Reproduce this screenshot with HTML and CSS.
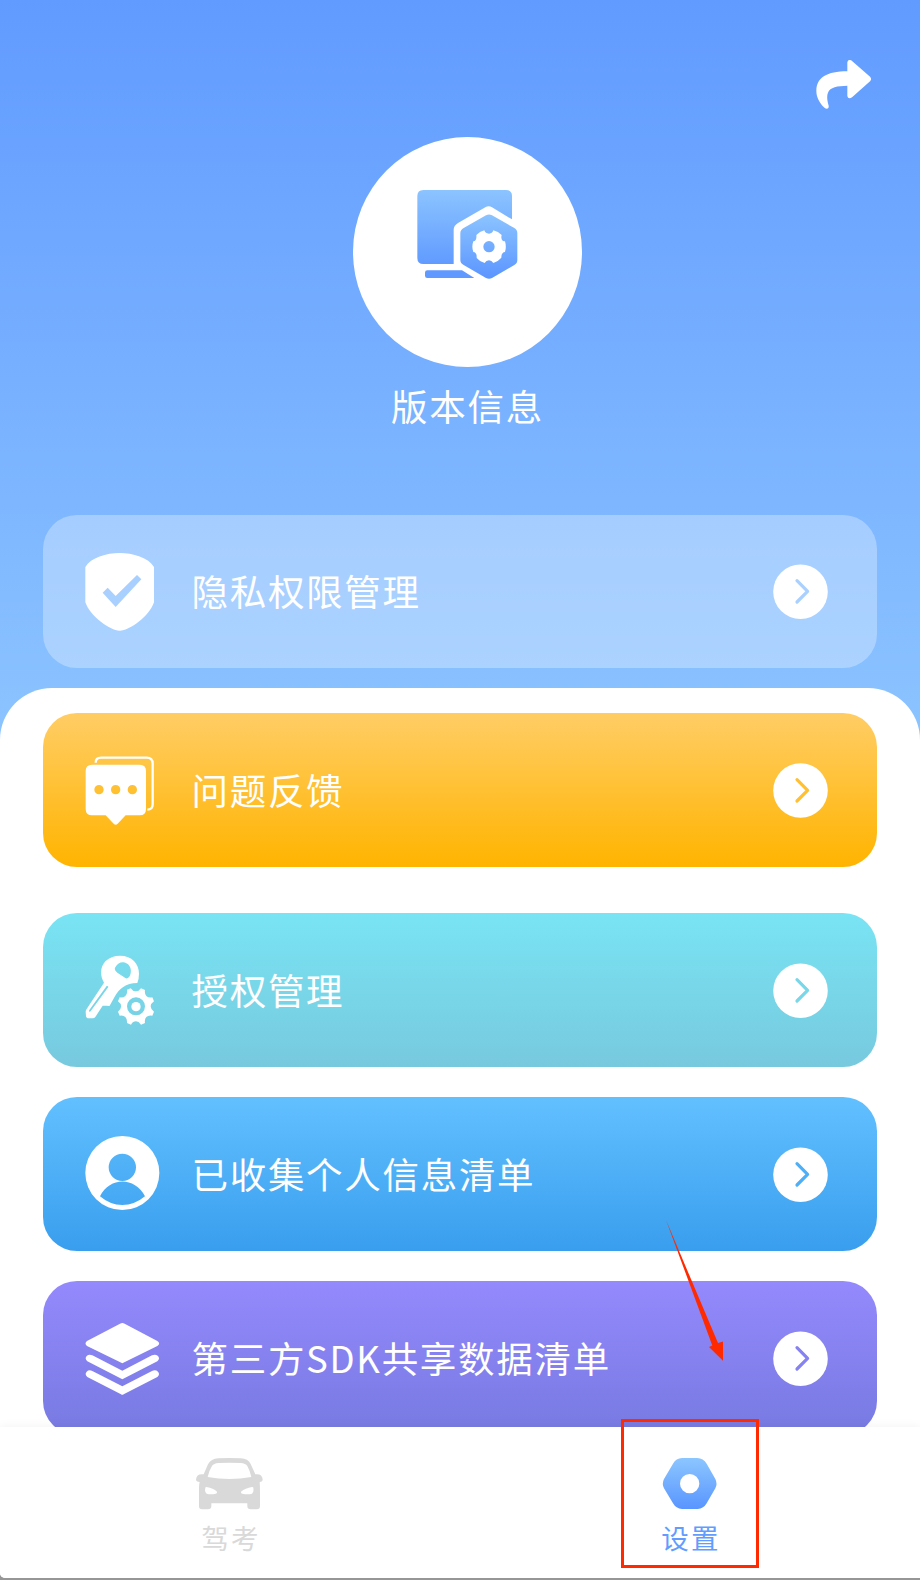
FILE: index.html
```html
<!DOCTYPE html>
<html lang="zh-CN">
<head>
  <meta charset="UTF-8">
  <meta name="viewport" content="width=device-width, initial-scale=1.0">
  <title>设置</title>
  <link rel="stylesheet" href="styles.css">
</head>
<body>

  <div class="screen">
    <div class="content">

      <!-- Header -->
      <div class="header">
        <svg class="share" viewBox="108 87 168 150">
          <path fill="#fff" d="M202 124V97Q203 89 210 90Q213 90 217 94L271 141Q276 147 271 153L217 201Q212 205 209 205Q203 205 202 198V167C172 168 150 171 144 188C139 200 143 216 146 227Q147 236 140 236Q135 236 131 231C117 216 109 200 109 182C110 143 140 124 202 124Z"/>
        </svg>
      </div>

      <div class="version">
        <div class="avatar">
          <svg class="avatar-icon" viewBox="231 192 303 270">
            <defs>
              <linearGradient id="screenFill" gradientUnits="userSpaceOnUse" x1="0" y1="195" x2="0" y2="417">
                <stop offset="0" stop-color="#8cc4ff"/>
                <stop offset="1" stop-color="#619bff"/>
              </linearGradient>
              <linearGradient id="hexFill" gradientUnits="userSpaceOnUse" x1="0" y1="268" x2="0" y2="461">
                <stop offset="0" stop-color="#8cc4ff"/>
                <stop offset="1" stop-color="#5b95ff"/>
              </linearGradient>
            </defs>
            <path fill="url(#screenFill)" d="M250 195H498Q516 195 516 213V283L456 247Q446 241 436 247L354 294Q341 302 341 314V417H250Q232 417 232 399V213Q232 195 250 195Z"/>
            <path fill="#6099ff" d="M262 436H366L403 459H262Q255 459 255 452V443Q255 436 262 436Z"/>
            <path fill="url(#hexFill)" d="M438 271Q447 266 456 271L523 309Q532 314 532 325V405Q532 415 523 420L456 459Q447 463 438 459L371 420Q361 415 361 405V325Q361 314 371 309Z"/>
            <path fill="#fff" fill-rule="evenodd" d="M433 316Q436 326 447 326Q457 326 460 316Q475 319 485 330Q482 341 488 347Q492 349 495 349Q500 365 495 381Q484 382 484 398Q474 410 460 414Q455 406 447 406Q438 406 434 414Q419 410 410 399Q411 382 400 381Q394 365 400 349Q411 347 409 330Q419 320 433 316ZM447 348A17 17 0 1 0 447 382A17 17 0 1 0 447 348Z"/>
          </svg>
        </div>
        <div class="version-title">版本信息</div>
      </div>

      <div class="card card-privacy">
        <svg class="card-icon" viewBox="165 153 240 240">
          <path fill="#fff" fill-rule="evenodd" d="M269 159C308 159 356 173 372 201V307C358 348 300 392 269 392C240 392 180 348 166 307V201C182 173 230 159 269 159ZM321 225L257 288L233 263L218 278L257 321L334 238Z"/>
        </svg>
        <span class="card-text">隐私权限管理</span>
        <svg class="card-go" viewBox="0 0 56 56"><circle cx="28.5" cy="28.7" r="27.3"/><path d="M25 17.700L35.600 28.300L25 39"/></svg>
      </div>

      <!-- White sheet -->
      <div class="sheet">
        <div class="card card-feedback">
          <svg class="card-icon" viewBox="165 150 240 240">
            <path fill="#fff" fill-rule="evenodd" d="M186 194H329Q348 194 348 213V327Q348 346 329 346H287L263 371Q257 377 251 371L227 346H186Q167 346 167 327V213Q167 194 186 194ZM207 255A14 14 0 1 0 207 283A14 14 0 1 0 207 255ZM257 255A14 14 0 1 0 257 283A14 14 0 1 0 257 255ZM307 255A14 14 0 1 0 307 283A14 14 0 1 0 307 255Z"/>
            <path fill="none" stroke="#fff" stroke-width="7" d="M197 188Q197 173 213 173H350Q368 173 368 191V313Q368 329 352 329"/>
          </svg>
          <span class="card-text">问题反馈</span>
          <svg class="card-go" viewBox="0 0 56 56"><circle cx="28.5" cy="28.5" r="27.3"/><path d="M25 17.700L35.600 28.300L25 39"/></svg>
        </div>

        <div class="card card-auth">
          <svg class="card-icon" viewBox="165 149 240 240">
            <path fill="#fff" fill-rule="evenodd" d="M270 166C306 166 327 190 327 220Q327 235 322 248C287 248 267 266 254 289L239 316Q236 318 232 316H218L196 350Q193 354 188 354H173Q169 353 168 348L167 334Q167 330 170 326L222 247C208 222 212 199 226 183Q243 166 270 166ZM256 201Q251 209 262 217L286 233Q293 237 299 228C307 211 302 190 281 186Q266 184 256 201ZM230 257L178 329Q176 333 179 334Q181 335 184 330L235 260Q234 256 230 257Z"/>
            <g fill="#fff">
              <path fill-rule="evenodd" d="M291 268L302 264Q309 274 318 273Q327 273 333 264L345 269Q343 281 349 287Q355 293 367 291L372 303Q362 310 362 318Q362 327 372 334L367 346Q355 344 349 350Q343 356 345 368L333 373Q326 363 318 363Q309 363 303 373L291 368Q292 356 286 350Q280 344 269 346L264 334Q274 327 273 318Q273 309 264 303L269 291Q280 293 286 287Q293 281 291 268ZM318 291A27 27 0 1 0 318 345A27 27 0 1 0 318 291Z"/>
              <circle cx="318" cy="319" r="14"/>
            </g>
          </svg>
          <span class="card-text">授权管理</span>
          <svg class="card-go" viewBox="0 0 56 56"><circle cx="28.5" cy="28.7" r="27.3"/><path d="M25 17.700L35.600 28.300L25 39"/></svg>
        </div>

        <div class="card card-personal">
          <svg class="card-icon" viewBox="165 132 240 240">
            <path fill="#fff" fill-rule="evenodd" d="M277 138A110.500 110.500 0 1 0 277 360A110.500 110.500 0 1 0 277 138ZM277 191A41 41 0 1 1 277 273A41 41 0 1 1 277 191ZM210 319C240 260 314 260 345 319Q314 345 277 345Q240 345 210 319Z"/>
          </svg>
          <span class="card-text">已收集个人信息清单</span>
          <svg class="card-go" viewBox="0 0 56 56"><circle cx="28.5" cy="28.7" r="27.3"/><path d="M25 17.700L35.600 28.300L25 39"/></svg>
        </div>

        <div class="card card-sdk">
          <svg class="card-icon" viewBox="-1 -2 240 240">
            <path fill="#fff" d="M104 15Q111 11 118 15L216 67Q227 74 216 82L111 134L5 82Q-4 74 5 67Z"/>
            <path fill="#fff" d="M6 128Q-3 120 4 112Q11 105 21 110L111 156L200 110Q210 105 218 112Q225 120 216 128L111 182Z"/>
            <path fill="#fff" d="M6 175Q-3 167 4 159Q11 152 21 157L111 203L200 157Q210 152 218 159Q225 167 216 175L115 227Q111 230 107 227Z"/>
          </svg>
          <span class="card-text">第三方SDK共享数据清单</span>
          <svg class="card-go" viewBox="0 0 56 56"><circle cx="28.5" cy="28.7" r="27.3"/><path d="M25 17.700L35.600 28.300L25 39"/></svg>
        </div>
      </div>
    </div>

    <!-- Tab bar -->
    <div class="tabbar">
      <div class="tab">
        <svg class="tab-icon" viewBox="588 171 204 159">
          <path fill="#d9d9d9" fill-rule="evenodd" d="M655 175Q688 173 722 175Q744 176 752 192L766 223Q786 220 788 238Q788 246 779 246Q780 258 780 275V318Q780 328 770 328H752Q742 328 742 318V310H634V318Q634 328 624 328H606Q597 328 597 318V262Q597 253 599 246Q588 246 588 238Q590 220 611 223L624 193Q633 176 655 175ZM656 189Q641 190 636 198Q628 210 623 231Q688 243 754 231Q749 210 742 198Q737 190 722 189Q688 188 656 189ZM616 264Q615 261 620 261Q640 264 651 275Q652 280 647 281Q632 284 620 281Q613 277 616 264ZM760 264Q761 261 756 261Q736 264 723 275Q722 280 727 281Q744 284 756 281Q762 277 760 264Z"/>
        </svg>
        <span class="tab-text">驾考</span>
      </div>
      <div class="tab active">
        <svg class="tab-icon" viewBox="168 771 204 159">
          <defs>
            <linearGradient id="tabFill" x1="0" y1="0" x2="0" y2="1">
              <stop offset="0" stop-color="#8cc6ff"/>
              <stop offset="1" stop-color="#5995ff"/>
            </linearGradient>
          </defs>
          <path fill="url(#tabFill)" fill-rule="evenodd" d="M246 774H292Q310 775 320 791L346 837Q353 851 346 865L320 910Q311 926 293 927H246Q228 926 219 910L192 865Q185 851 192 837L219 791Q228 775 246 774ZM269 822A29 29 0 1 0 269 880A29 29 0 1 0 269 822Z"/>
        </svg>
        <span class="tab-text">设置</span>
      </div>
    </div>

    <!-- Hint marks -->
    <svg class="hint-arrow" viewBox="0 0 60 142">
      <path fill="#ff2a00" d="M0 0L52 123L57 121.500V140.700L43 127L46.300 125.500Z"/>
    </svg>
    <div class="hint-box"></div>
  </div>

</body>
</html>
```

FILE: styles.css
```css
* {
  margin: 0;
  padding: 0;
  box-sizing: border-box;
}

body {
  font-family: "Noto Sans CJK SC", sans-serif;
  background-color: #969696;
  color: #fff;
  overflow: hidden;
}

svg {
  display: block;
  flex-shrink: 0;
}

.screen {
  position: relative;
  width: 920px;
  height: 1578px;
  background-color: #fff;
  border-radius: 0 0 0 5px;
  overflow: hidden;
}

.content {
  height: 1427px;
  overflow: hidden;
  background: linear-gradient(#619bff, #8cc4ff 740px);
}

.header {
  display: flex;
  justify-content: flex-end;
  height: 137px;
  padding: 59px 48px 0 0;
}

.share {
  width: 56px;
  height: 50px;
}

.version {
  display: flex;
  flex-direction: column;
  align-items: center;
  height: 377.5px;
  padding-left: 15px;
}

.avatar {
  display: flex;
  justify-content: center;
  width: 229px;
  height: 229.5px;
  padding-top: 52px;
  border-radius: 50%;
  background-color: #fff;
}

.avatar-icon {
  width: 101px;
  height: 90px;
}

.version-title {
  margin-top: 12.5px;
  font-size: 36.5px;
  line-height: 54px;
  letter-spacing: 1.8px;
}

.card {
  display: flex;
  align-items: center;
  height: 153.5px;
  margin: 0 43.4px 0 43.2px;
  padding: 0 48.6px 0 41.8px;
  border-radius: 34px;
}

.card-icon {
  width: 80px;
  height: 80px;
}

.card-text {
  flex: 1;
  margin-left: 26.5px;
  font-size: 36.5px;
  line-height: 54px;
  letter-spacing: 1.7px;
  white-space: nowrap;
}

.card-go {
  width: 56px;
  height: 56px;
  overflow: visible;
}

.card-go circle {
  fill: #fff;
}

.card-go path {
  fill: none;
  stroke: currentColor;
  stroke-width: 3.2;
  stroke-linecap: round;
  stroke-linejoin: round;
}

.card-privacy {
  background-color: rgba(255, 255, 255, 0.3);
}

.card-privacy .card-go {
  color: #a9d0ff;
}

.card-feedback {
  background: linear-gradient(#ffcd65, #ffb400);
}

.card-feedback .card-go {
  color: #ffc034;
}

.card-auth {
  margin-top: 46.5px;
  background: linear-gradient(#79e4f4, #77c9de);
}

.card-auth .card-go {
  color: #79d7e8;
}

.card-personal {
  margin-top: 30.5px;
  background: linear-gradient(#62c0ff, #399eee);
}

.card-personal .card-go {
  color: #4eaff7;
}

.card-sdk {
  margin-top: 30.5px;
  background: linear-gradient(#9489fd, #777ae1);
}

.card-sdk .card-go {
  color: #8682ef;
}

.sheet {
  height: 760px;
  margin-top: 20px;
  padding-top: 25.3px;
  border-radius: 52px 52px 0 0;
  background-color: #fff;
}

.tabbar {
  position: relative;
  display: flex;
  height: 151px;
  background-color: #fff;
  box-shadow: 0 0 10px rgba(0, 0, 0, 0.06);
}

.tab {
  flex: 1;
  display: flex;
  flex-direction: column;
  align-items: center;
  padding-top: 30px;
  color: #d9d9d9;
}

.tab.active {
  color: #639cff;
}

.tab-icon {
  width: 68px;
  height: 53px;
}

.tab-text {
  margin-top: 7px;
  padding-left: 2px;
  font-size: 27.5px;
  line-height: 40px;
  letter-spacing: 2.2px;
}

/* marks drawn over the screen */
.hint-arrow {
  position: absolute;
  left: 666px;
  top: 1220px;
  width: 60px;
  height: 142px;
}

.hint-box {
  position: absolute;
  left: 621px;
  top: 1419px;
  width: 138px;
  height: 149px;
  border: 3px solid #ff2a00;
}
```
